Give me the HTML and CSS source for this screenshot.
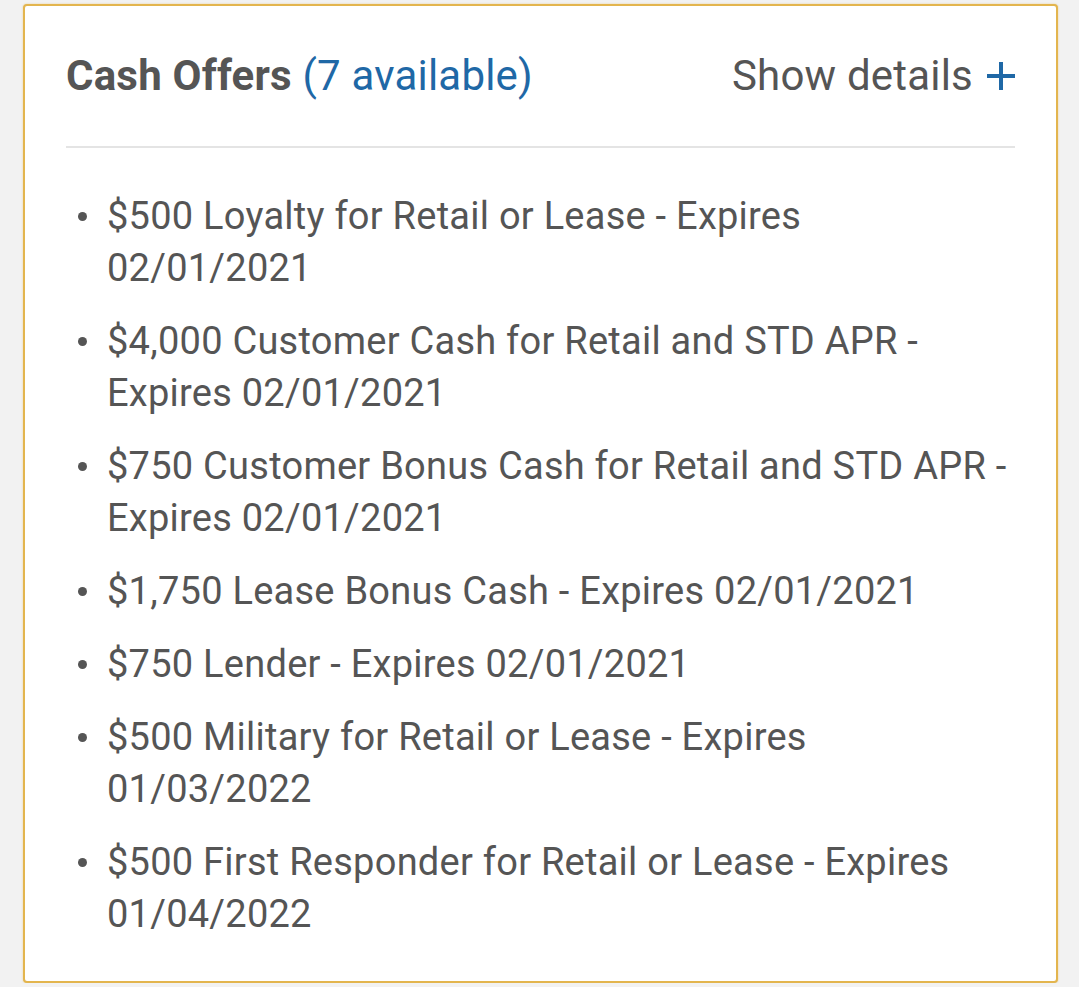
FILE: index.html
```html
<!DOCTYPE html>
<html lang="en">
<head>
<meta charset="utf-8">
<title>Cash Offers</title>
<link rel="stylesheet" href="styles.css">
</head>
<body>
<section class="card">
  <header class="card-header">
    <h2 class="title">Cash Offers <span class="count">(7 available)</span></h2>
    <button class="toggle" type="button">Show details <span class="plus" aria-hidden="true"></span></button>
  </header>
  <ul class="offers">
    <li>$500 Loyalty for Retail or Lease - Expires 02/01/2021</li>
    <li>$4,000 Customer Cash for Retail and STD APR - Expires 02/01/2021</li>
    <li>$750 Customer Bonus Cash for Retail and STD APR - Expires 02/01/2021</li>
    <li>$1,750 Lease Bonus Cash - Expires 02/01/2021</li>
    <li>$750 Lender - Expires 02/01/2021</li>
    <li>$500 Military for Retail or Lease - Expires 01/03/2022</li>
    <li>$500 First Responder for Retail or Lease - Expires 01/04/2022</li>
  </ul>
</section>
</body>
</html>
```
FILE: styles.css
```css
* { box-sizing: border-box; }
html, body { margin: 0; padding: 0; }
body {
  background: #f2f2f2;
  font-family: Roboto, "Liberation Sans", Arial, sans-serif;
  color: #555555;
}
.card {
  margin: 4px 0 0 23px;
  width: 1035px;
  background: #ffffff;
  border: 2px solid #e3b54e;
  border-radius: 4px;
  box-shadow: 0 0 2px rgba(227, 181, 78, 0.6);
  padding: 0 41px 41px 41px;
}
.card-header {
  display: flex;
  justify-content: space-between;
  align-items: center;
  padding: 45px 0 45px 0;
  border-bottom: 2px solid #e4e4e4;
}
.title {
  margin: 0;
  font-size: 42px;
  line-height: 50px;
  font-weight: 700;
  letter-spacing: 0.2px;
  color: #555555;
}
.count {
  font-weight: 400;
  color: #1f68a6;
}
.toggle {
  display: flex;
  align-items: center;
  gap: 14px;
  border: 0;
  background: none;
  padding: 0;
  font-family: inherit;
  font-size: 42px;
  line-height: 50px;
  letter-spacing: 0.2px;
  color: #555555;
}
.plus {
  position: relative;
  width: 28px;
  height: 28px;
  display: inline-block;
}
.plus::before, .plus::after {
  content: "";
  position: absolute;
  background: #1f68a6;
}
.plus::before {
  left: 0; right: 0; top: 12px; height: 4px;
}
.plus::after {
  top: 0; bottom: 0; left: 12px; width: 4px;
}
.offers {
  list-style: none;
  margin: 0;
  padding: 42px 0 0 0;
}
.offers li {
  display: flex;
  font-size: 38px;
  line-height: 52px;
  letter-spacing: 0.25px;
  margin-bottom: 21px;
  padding-right: 5px;
}
.offers li:last-child { margin-bottom: 0; }
.offers li::before {
  content: "";
  flex: 0 0 auto;
  width: 9px;
  height: 9px;
  border-radius: 50%;
  background: #555555;
  margin: 22px 20px 0 12px;
}
```
